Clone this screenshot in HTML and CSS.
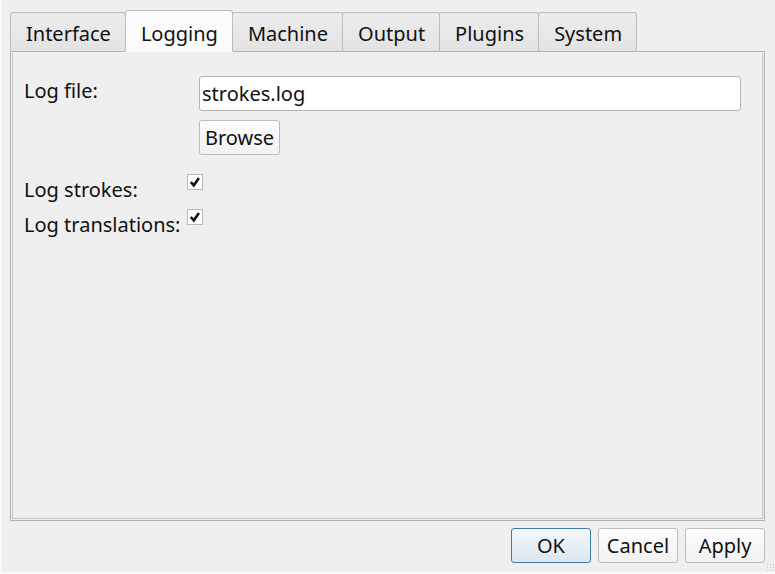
FILE: index.html
```html
<!DOCTYPE html>
<html>
<head>
<meta charset="utf-8">
<link rel="stylesheet" href="styles.css">
</head>
<body>
<div class="window">
  <div class="tabbar">
    <div class="tab">Interface</div>
    <div class="tab active">Logging</div>
    <div class="tab">Machine</div>
    <div class="tab">Output</div>
    <div class="tab">Plugins</div>
    <div class="tab">System</div>
  </div>
  <div class="pane">
    <div class="pane-inner">
      <div class="file-form">
        <div class="label">Log file:</div>
        <div class="file-field">
          <div class="textbox">strokes.log</div>
          <button class="btn browse">Browse</button>
        </div>
      </div>
      <div class="check-form">
        <div class="label">Log strokes:</div>
        <div class="checkbox"><svg viewBox="0 0 16 16" width="16" height="16"><path d="M3.8 8 L6.8 11.4 L11.9 3.9" fill="none" stroke="#111" stroke-width="2.6"/></svg></div>
        <div class="label">Log translations:</div>
        <div class="checkbox"><svg viewBox="0 0 16 16" width="16" height="16"><path d="M3.8 8 L6.8 11.4 L11.9 3.9" fill="none" stroke="#111" stroke-width="2.6"/></svg></div>
      </div>
    </div>
  </div>
  <div class="footer">
    <button class="btn default">OK</button>
    <button class="btn">Cancel</button>
    <button class="btn">Apply</button>
  </div>
  <div class="grip"></div>
</div>
</body>
</html>
```
FILE: styles.css
```css
* { box-sizing: border-box; }
html, body { margin: 0; padding: 0; }
body {
  background: #f9f9f9;
  font-family: "Noto Sans", "Open Sans", sans-serif;
  font-size: 20px;
  color: #111;
}
.window {
  position: relative;
  margin-left: 2px;
  width: 773px;
  height: 572px;
  background: #efefef;
  padding: 10px 10px 0 8px;
  display: flex;
  flex-direction: column;
}
.tabbar {
  display: flex;
  align-items: flex-end;
  height: 42px;
  margin-bottom: -1px;
  position: relative;
  z-index: 1;
}
.tab {
  height: 40px;
  padding: 2px 14px 0 15px;
  display: flex;
  align-items: center;
  background: linear-gradient(#ececec, #e3e3e3);
  border: 1px solid #bdbdbd;
  border-bottom-color: #b0b0b0;
  border-radius: 3px 3px 0 0;
  margin-right: -1px;
}
.tab.active {
  height: 42px;
  background: #fcfcfc;
  border-bottom-color: #fcfcfc;
  padding-top: 4px;
  z-index: 2;
  position: relative;
}
.pane {
  height: 470px;
  border: 1px solid #b0b0b0;
  padding: 1px;
  background: #efefef;
}
.pane-inner {
  height: 100%;
  border: 1px solid #c4c4c4;
  border-top-color: #efefef;
  padding: 22px 21px 0 11px;
}
.label { line-height: 22px; }
.file-form {
  display: grid;
  grid-template-columns: 175px 1fr;
}
.file-form .label { padding-top: 4px; }
.file-field {
  display: flex;
  flex-direction: column;
  align-items: flex-start;
  gap: 9px;
}
.textbox {
  width: 100%;
  height: 35px;
  background: #fff;
  border: 1px solid #b5b5b5;
  border-radius: 3px;
  padding: 0 2px;
  line-height: 33px;
}
.btn {
  font-family: inherit;
  font-size: 20px;
  color: #111;
  height: 35px;
  min-width: 80px;
  padding: 0 5px;
  background: linear-gradient(#fdfdfd, #f1f1f1);
  border: 1px solid #bcbcbc;
  border-radius: 3px;
}
.check-form {
  display: grid;
  grid-template-columns: auto 16px;
  justify-content: start;
  column-gap: 7px;
  row-gap: 8px;
  margin-top: 19px;
}
.check-form .label { padding-top: 5px; }
.checkbox {
  width: 16px;
  height: 16px;
  background: #fff;
  border: 1px solid #b8b8b8;
  display: flex;
  align-items: center;
  justify-content: center;
}
.checkbox svg { display: block; flex: none; }
.footer {
  display: flex;
  justify-content: flex-end;
  gap: 7px;
  padding-top: 7px;
}
.btn.default {
  border-color: #3d7cab;
  background: linear-gradient(#f4f8fb, #dde7ef);
}
.grip {
  position: absolute;
  right: 1px;
  bottom: 1px;
  width: 8px;
  height: 8px;
  background-image: radial-gradient(circle, #c2c2c2 0.8px, transparent 1px);
  background-size: 3px 3px;
}
```
